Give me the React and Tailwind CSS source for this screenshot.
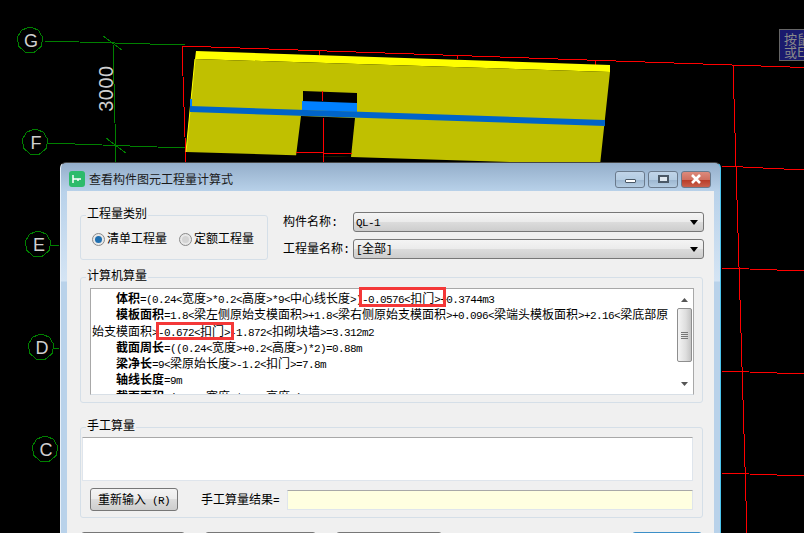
const Mixed = ({ text }) =>
  text.split(/([\u4e00-\u9fff]+)/).map((part, i) =>
    /[\u4e00-\u9fff]/.test(part) ? (
      <span key={i} className="text-[12px]">{part}</span>
    ) : (
      <span key={i} className="text-[11px] tracking-[-0.6px]">{part}</span>
    ),
  )

const axes = [
  { label: 'G', cx: 30, cy: 40 },
  { label: 'F', cx: 35, cy: 142 },
  { label: 'E', cx: 38, cy: 244 },
  { label: 'D', cx: 41, cy: 347 },
  { label: 'C', cx: 45, cy: 449 },
]

const ringPoints = (cx, cy) =>
  Array.from({ length: 9 }, (_, i) => {
    const a = (i / 9) * Math.PI * 2 - Math.PI / 2
    return `${cx + 13 * Math.cos(a)},${cy + 13 * Math.sin(a)}`
  }).join(' ')

const redLines = [
  'M182 46 L804 67.5',
  'M182 46 L185 137 L185.5 162',
  'M319 50 L319 55',
  'M457 55 L457 59',
  'M595 60 L595 65',
  'M733 65 L747 533',
  'M722 166 L804 170',
  'M722 268 L804 271',
  'M722 371 L804 374',
  'M722 473 L804 476',
]

const CadCanvas = () => (
  <svg className="absolute inset-0" width="804" height="533" viewBox="0 0 804 533">
    <g fill="none" stroke="#ff0000" strokeWidth="1" shapeRendering="crispEdges">
      {redLines.map((d) => <path key={d} d={d} />)}
    </g>
    <polygon points="196,51 610,65 610,72 195,59" fill="#ffff00" />
    <polygon points="195,59 610,72 600,165 351,157 186,152" fill="#c0c000" />
    <path d="M195 59 L186 152" stroke="#ffff00" fill="none" />
    <polygon points="303,91 357,93 357,104 303,102" fill="#000000" />
    <polygon points="301,116 355,118 351,157 296,156" fill="#000000" />
    <polygon points="302,101 357,103 357,112 302,110" fill="#0080ff" />
    <polygon points="190,99 192,99 192,107 190,107" fill="#0080ff" />
    <polygon points="190,106 605,120 605,126 190,112" fill="#0064c8" />
    <path d="M296 152 L352 154 M322 91 L322 101 M323 118 L323 162" stroke="#ff0000" fill="none" shapeRendering="crispEdges" />
    <g fill="none" stroke="#008000" strokeWidth="1" shapeRendering="crispEdges">
      <path d="M44 41 L185 45" />
      <path d="M47 143 L185 148" />
      <path d="M113 44 L116 162" />
      <path d="M103 36 L122 50" />
      <path d="M106 138 L126 153" />
      <path d="M51 245 L59 246" />
      <path d="M54 348 L59 348" />
      {axes.map((a) => <polygon key={a.label} points={ringPoints(a.cx, a.cy)} />)}
    </g>
    <g fill="#d0d0d0" fontFamily="'Liberation Sans', sans-serif" fontSize="18" textAnchor="middle">
      {axes.map((a) => (
        <text key={a.label} x={a.cx + 1} y={a.cy + 6.5}>{a.label}</text>
      ))}
      <text transform="translate(113 88.5) rotate(-90)" fontSize="20" letterSpacing="0.5">3000</text>
    </g>
  </svg>
)

const WinButton = ({ className, children }) => (
  <div className={`flex h-[17px] w-[30px] items-center justify-center rounded-[3px] border border-[#6a7a8c] ${className}`}>
    {children}
  </div>
)

const TitleBar = () => (
  <div className="flex h-[28px] shrink-0 items-center pl-[8px] pr-[9px] pt-[4px]">
    <svg width="16" height="16" viewBox="0 0 16 16" className="shrink-0">
      <rect width="16" height="16" rx="3" fill="#2dbb6b" />
      <path d="M4 4 L4 12 M4 8 L12 8 M9 8 L9 10" stroke="#ffffff" strokeWidth="1.5" fill="none" />
    </svg>
    <span className="ml-[4px] pt-[3px] text-[12px] text-[#1a1a1a]">查看构件图元工程量计算式</span>
    <div className="ml-auto flex gap-[3px]">
      <WinButton className="bg-[linear-gradient(#c0d4e8_0%,#b4cce2_50%,#9cb6d0_52%,#b4cce2_100%)]">
        <div className="mt-[3px] h-[4px] w-[11px] rounded-[1px] border border-[#4a5866] bg-white" />
      </WinButton>
      <WinButton className="bg-[linear-gradient(#c0d4e8_0%,#b4cce2_50%,#9cb6d0_52%,#b4cce2_100%)]">
        <div className="h-[8px] w-[11px] border-[2px] border-[#4a5866] bg-[#dfe8f0]" />
      </WinButton>
      <WinButton className="border-[#5a2020] bg-[linear-gradient(#dc8a7c_0%,#d07060_50%,#b83a26_52%,#c8604c_100%)]">
        <svg width="12" height="10" viewBox="0 0 12 10">
          <path d="M2 1 L10 9 M10 1 L2 9" stroke="#ffffff" strokeWidth="2.6" fill="none" />
        </svg>
      </WinButton>
    </div>
  </div>
)

const Radio = ({ checked, label }) => (
  <div className="flex items-center gap-[2px]">
    <span className="flex h-[13px] w-[13px] items-center justify-center rounded-full border border-[#8a8a8a] bg-[#e8e8e8]">
      <span className={`h-[7px] w-[7px] rounded-full ${checked ? 'bg-[#1f6fb0]' : 'bg-[#d4d4d4]'}`} />
    </span>
    <span className="pt-[1px] text-[12px] leading-none">{label}</span>
  </div>
)

const Select = ({ label, value }) => (
  <div className="flex items-center">
    <span className="w-[70px] pt-[1px] text-[12px] leading-none">{label}</span>
    <div className="flex h-[20px] w-[351px] items-center rounded-[3px] border border-[#777777] bg-[linear-gradient(#f4f4f4_0%,#ebebeb_48%,#dcdcdc_50%,#cdcdcd_100%)] pl-[2px] pr-[5px]">
      <span className="leading-none"><Mixed text={value} /></span>
      <svg className="ml-auto" width="8" height="5" viewBox="0 0 8 5">
        <polygon points="0,0 8,0 4,5" fill="#000000" />
      </svg>
    </div>
  </div>
)

const Group = ({ title, className, children }) => (
  <div className={`relative rounded-[3px] border border-[#d5dfe8] ${className}`}>
    <span className="absolute left-[5px] top-[-7px] bg-[#f0f0f0] px-[1px] text-[12px] leading-[13px]">{title}</span>
    {children}
  </div>
)

const lines = [
  { name: '体积', body: '=(0.24<宽度>*0.2<高度>*9<中心线长度>)-0.0576<扣门>+0.3744m3' },
  { name: '模板面积', body: '=1.8<梁左侧原始支模面积>+1.8<梁右侧原始支模面积>+0.096<梁端头模板面积>+2.16<梁底部原' },
  { body: '始支模面积>-0.672<扣门>-1.872<扣砌块墙>=3.312m2' },
  { name: '截面周长', body: '=((0.24<宽度>+0.2<高度>)*2)=0.88m' },
  { name: '梁净长', body: '=9<梁原始长度>-1.2<扣门>=7.8m' },
  { name: '轴线长度', body: '=9m' },
  { name: '截面面积', body: '=(0.24<宽度>*0.2<高度>)=0.048m2' },
]

const ScrollBar = () => (
  <div className="flex w-[17px] shrink-0 flex-col items-center bg-white">
    <svg className="mt-[9px]" width="7" height="4" viewBox="0 0 7 4">
      <polygon points="3.5,0 7,4 0,4" fill="#555555" />
    </svg>
    <div className="mt-[6px] flex h-[54px] w-[15px] flex-col items-center justify-center gap-[1px] rounded-[2px] border border-[#8e8e8e] bg-[linear-gradient(90deg,#f4f4f4,#dedede_60%,#c4c4c4)]">
      <span className="h-[1px] w-[7px] bg-[#777777]" />
      <span className="h-[1px] w-[7px] bg-[#777777]" />
      <span className="h-[1px] w-[7px] bg-[#777777]" />
      <span className="h-[1px] w-[7px] bg-[#777777]" />
    </div>
    <svg className="mt-[20px]" width="7" height="4" viewBox="0 0 7 4">
      <polygon points="0,0 7,0 3.5,4" fill="#555555" />
    </svg>
  </div>
)

const Dialog = () => (
  <div className="absolute left-[60px] top-[162px] flex h-[371px] w-[661px] flex-col overflow-hidden rounded-t-[6px] border-l border-r border-t border-l-[#e8f0f8] border-r-[#4cc4ec] border-t-[#444444] bg-[linear-gradient(#94aeca_0px,#b9d2ea_29px,#d4e4f4_118px,#b9d2ea_119px)] font-['Liberation_Mono','Noto_Sans_CJK_SC',monospace] text-black">
    <TitleBar />
    <div className="mx-[6px] flex-1 bg-[#f0f0f0] pl-[13px] pr-[10px]">
      <div className="flex items-start pt-[21px]">
        <Group title="工程量类别" className="mt-[3px] h-[45px] w-[188px] shrink-0">
          <div className="flex gap-[12px] pl-[11px] pt-[17px]">
            <Radio checked label="清单工程量" />
            <Radio label="定额工程量" />
          </div>
        </Group>
        <div className="ml-[15px] flex flex-col gap-[7px]">
          <Select label="构件名称:" value="QL-1" />
          <Select label="工程量名称:" value="[全部]" />
        </div>
      </div>

      <Group title="计算机算量" className="mt-[17px] h-[126px] w-[623px] pl-[9px] pt-[10px]">
        <div className="flex h-[107px] w-[604px] overflow-hidden border border-[#a8a8a8] border-b-[#d8dfe6] bg-white">
          <div className="min-w-0 flex-1 overflow-hidden pl-[1px] pt-[2px]">
            {lines.map((line, i) => (
              <p key={i} className={`h-[16.3px] whitespace-nowrap leading-[16px] ${line.name ? 'pl-[24px]' : ''}`}>
                {line.name && <b className="text-[12px]">{line.name}</b>}
                <Mixed text={line.body} />
              </p>
            ))}
          </div>
          <ScrollBar />
        </div>
        <div className="absolute left-[278px] top-[9px] h-[20px] w-[87px] border-[3px] border-[#f43838]" />
        <div className="absolute left-[75px] top-[44px] h-[18px] w-[78px] border-[3px] border-[#f43838]" />
      </Group>

      <Group title="手工算量" className="mt-[24px] h-[91px] w-[623px] pl-[1px] pt-[9px]">
        <div className="h-[44px] w-[611px] border border-[#dfe5ec] border-t-[#a8a8a8] bg-white" />
        <div className="mt-[7px] flex items-center">
          <button className="ml-[8px] h-[23px] w-[88px] rounded-[3px] border border-[#777777] bg-[linear-gradient(#f4f4f4_0%,#ebebeb_48%,#dcdcdc_50%,#cdcdcd_100%)] leading-none">
            <Mixed text="重新输入 (R)" />
          </button>
          <span className="ml-[23px] w-[86px] leading-none"><Mixed text="手工算量结果=" /></span>
          <div className="h-[20px] w-[406px] border border-[#dfe5ec] border-t-[#a8a8a8] bg-[#ffffe0]" />
        </div>
      </Group>

      <div className="mt-[14px] flex gap-[20px] pl-[1px]">
        <button className="h-[24px] w-[104px] rounded-t-[3px] border border-[#777777]" />
        <button className="h-[24px] w-[111px] rounded-t-[3px] border border-[#777777]" />
        <button className="h-[24px] w-[106px] rounded-t-[3px] border border-[#777777]" />
        <button className="ml-auto mr-[2px] h-[24px] w-[70px] rounded-t-[3px] border border-[#3c8fc8]" />
      </div>
    </div>
  </div>
)

export default function App() {
  return (
    <div className="relative h-[533px] w-[804px] overflow-hidden bg-black">
      <CadCanvas />
      <div className="absolute left-[779px] top-[29px] h-[32px] w-[60px] border border-[#666666] bg-[#1a1a6e] pl-[4px] pt-[2px] font-['Noto_Sans_CJK_SC',sans-serif] text-[13px] leading-[13px] text-[#8a8a8a]">
        按鼠标<br />或ESC
      </div>
      <Dialog />
    </div>
  )
}
